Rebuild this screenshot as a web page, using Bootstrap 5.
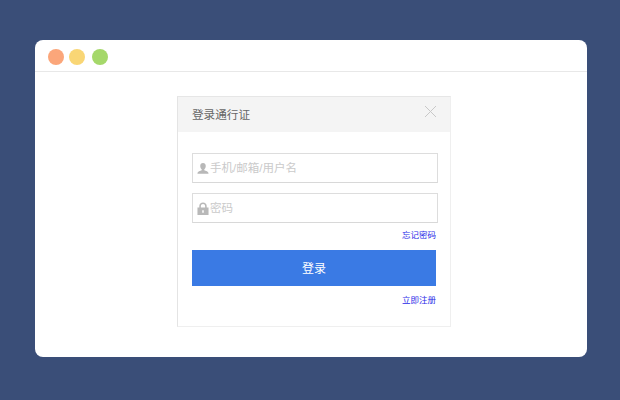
<!DOCTYPE html>
<html lang="zh">
<head>
<meta charset="utf-8">
<title>登录通行证</title>
<link href="https://cdn.jsdelivr.net/npm/bootstrap@5.3.0/dist/css/bootstrap.min.css" rel="stylesheet">
<style>
html,body{height:100%;}
body{background:#3a4e78;font-family:"Liberation Sans","Noto Sans CJK SC",sans-serif;padding:40px 33px 43px 35px;overflow:hidden;}
.win{height:317px;background:#fff;border-radius:8px;overflow:hidden;}
.win-bar{height:32px;border-bottom:1px solid #e8e8e8;padding:9px 0 0 13px;}
.dot{display:block;width:16px;height:16px;border-radius:50%;}
.dot-a{background:#fba67a;}
.dot-b{background:#f9d675;margin-left:5px;}
.dot-c{background:#a5d86a;margin-left:7px;}
.win-body{padding-top:24px;padding-left:142px;}
.dlg{width:274px;height:231px;border:1px solid #efefef;border-left:1px solid #e4e4e4;border-top-color:#e6e6e6;}
.dlg-head{height:35px;background:#f4f4f4;padding:0 13px 0 14px;font-size:11.6px;color:#666;}
.dlg-x{width:13px;height:13px;margin-top:-6px;}
.dlg-body{padding:21px 12px 0 14px;}
.fld{width:246px;height:30px;border:1px solid #ddd;border-bottom-color:#d8d8d8;padding-left:4px;font-size:11.5px;color:#cacaca;}
.fld+.fld{margin-top:10px;}
.fld-ico{width:12px;height:13px;flex:none;margin-right:1px;}
.fld-text{padding-top:2px;}
.lnk{display:block;font-size:8.5px;color:#2a2ae8;text-decoration:none;line-height:12px;padding-right:2px;}
.forgot{height:27px;padding-top:6px;}
.go{width:244px;height:36px;background:#3a7ae4;color:#fff;font-size:12px;border:0;border-radius:0;line-height:38px;}
.go:hover{background:#3a7ae4;color:#fff;}
.reg{padding-top:8px;}
</style>
</head>
<body>
<div class="win">
  <div class="win-bar d-flex">
    <span class="dot dot-a"></span><span class="dot dot-b"></span><span class="dot dot-c"></span>
  </div>
  <div class="win-body">
    <div class="dlg">
      <div class="dlg-head d-flex align-items-center justify-content-between">
        <span>登录通行证</span>
        <svg class="dlg-x" viewBox="0 0 13 13" aria-hidden="true"><path d="M1 1 12 12M12 1 1 12" stroke="#c8c8c8" stroke-width="1" fill="none"/></svg>
      </div>
      <div class="dlg-body">
        <div class="fld d-flex align-items-center">
          <svg class="fld-ico" viewBox="0 0 13 14" aria-hidden="true"><path d="M6.500 1C8.400 1 9.500 2.400 9.500 4.300 9.500 5.900 8.800 7.200 7.900 7.900V9C9.500 9.700 12.500 10.200 12.500 12.600H.5C.5 10.200 3.500 9.700 5.100 9V7.900C4.200 7.200 3.500 5.900 3.500 4.300 3.500 2.400 4.600 1 6.500 1Z" fill="#b8b8b8"/></svg>
          <span class="fld-text">手机/邮箱/用户名</span>
        </div>
        <div class="fld d-flex align-items-center">
          <svg class="fld-ico" viewBox="0 0 13 14" aria-hidden="true"><path fill-rule="evenodd" d="M2.500 6V4.300C2.500 2 4.200.5 6.500.5S10.500 2 10.500 4.300V6H12.500V14H.5V6ZM4.200 6H8.800V4.300C8.800 3 7.800 2.100 6.500 2.100S4.200 3 4.200 4.300ZM5.700 9V11.500H7.300V9Z" fill="#b8b8b8"/></svg>
          <span class="fld-text">密码</span>
        </div>
        <div class="forgot text-end"><a class="lnk" href="#">忘记密码</a></div>
        <button class="btn go d-block p-0" type="button">登录</button>
        <div class="reg text-end"><a class="lnk" href="#">立即注册</a></div>
      </div>
    </div>
  </div>
</div>
<script src="https://cdn.jsdelivr.net/npm/bootstrap@5.3.0/dist/js/bootstrap.bundle.min.js"></script>
</body>
</html>
